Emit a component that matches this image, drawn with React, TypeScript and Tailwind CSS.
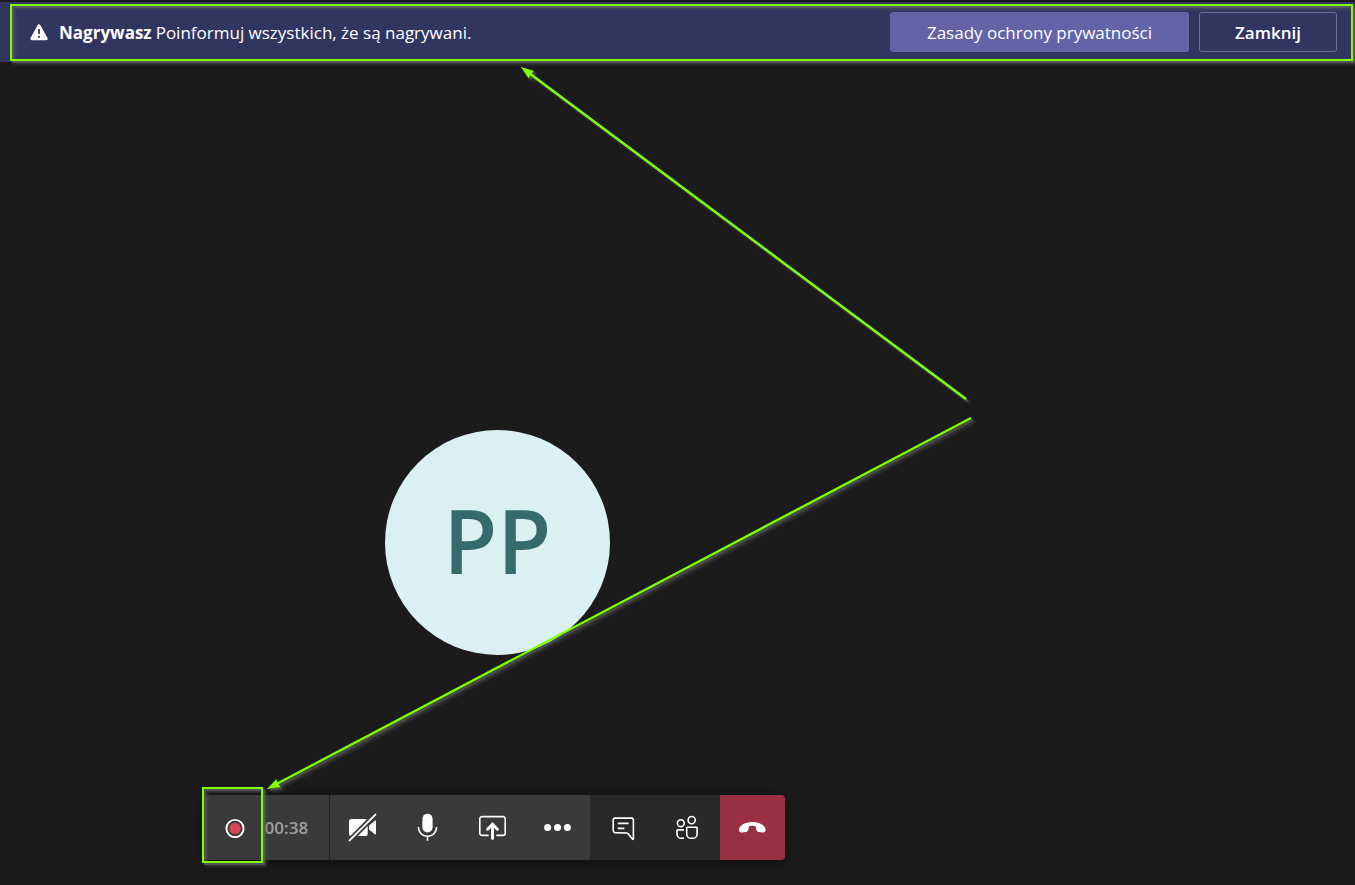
import React from 'react';

interface CallButtonProps {
  label: string;
  className?: string;
  children: React.ReactNode;
}

const CallButton: React.FC<CallButtonProps> = ({ label, className = '', children }) => (
  <button type="button" aria-label={label} className={`flex h-[65px] w-[65px] items-center justify-center ${className}`}>
    <svg width="29" height="29" viewBox="0 0 29 29" fill="none" stroke="none" aria-hidden="true">
      {children}
    </svg>
  </button>
);

// Green frame that points out a part of the screen
const Highlight: React.FC<{ className: string }> = ({ className }) => (
  <div
    className={`pointer-events-none absolute border-2 border-[#7fff00] [filter:drop-shadow(2px_2px_0_rgba(100,100,100,0.6))_drop-shadow(2px_2px_1px_rgba(90,90,90,0.6))] ${className}`}
  />
);

const RecordingBanner = () => (
  <header className="relative flex h-[60px] items-center justify-between bg-[#30365f] pr-[18px] pl-[30px] text-[17px] text-white">
    <Highlight className="top-[2px] right-[2px] bottom-px left-[10px]" />
    <div className="relative flex items-center pt-[2px]" role="status">
      <svg width="18" height="18" viewBox="0 0 18 18" className="mr-[11px] shrink-0" aria-hidden="true">
        <path d="M7.7 1a1.5 1.5 0 0 1 2.6 0l7.2 13a1.5 1.5 0 0 1-1.3 2.2H1.8A1.5 1.5 0 0 1 .5 14z" fill="#fff" />
        <path d="M9 5v5" stroke="#30365f" strokeWidth="1.8" />
        <circle cx="9" cy="12.8" r="1.1" fill="#30365f" />
      </svg>
      <strong className="mr-1 font-bold">Nagrywasz</strong>
      <span>Poinformuj wszystkich, że są nagrywani.</span>
    </div>
    <div className="relative flex gap-[10px]">
      <button type="button" className="h-10 w-[299px] rounded-[3px] bg-[#6264a7] pt-[2px]">Zasady ochrony prywatności</button>
      <button type="button" className="h-10 w-[138px] rounded-[3px] border border-[#6f7391] pt-[2px] font-semibold shadow-sm">Zamknij</button>
    </div>
  </header>
);

const CallToolbar = () => (
  <div role="toolbar" className="flex rounded-[4px] shadow-[0_2px_14px_rgba(0,0,0,0.55)]">
    <div className="relative flex h-[65px] w-[125px] items-center rounded-l-[4px] border-r border-[#202020] bg-[#3a3a3a]">
      <button type="button" aria-label="Nagrywanie" className="flex h-[65px] w-[60px] items-center justify-center">
        <svg width="20" height="20" viewBox="0 0 20 20" aria-hidden="true">
          <circle cx="10" cy="10.5" r="8.6" fill="none" stroke="#fff" strokeWidth="1.9" />
          <circle cx="10" cy="10.5" r="5.8" fill="#d74654" />
        </svg>
      </button>
      <span className="text-[17px] font-semibold text-[#a19f9d]">00:38</span>
      <Highlight className="top-[-8px] left-[-3px] h-[76px] w-[61px]" />
    </div>
    <div className="flex bg-[#3a3a3a]">
      <CallButton label="Włącz kamerę">
        <rect x="1" y="6" width="18.7" height="17" rx="2.6" fill="#fff" />
        <path d="M28 8.4v12.2c0 .8-.7 1-1.2.6L21 16.5v-4l5.8-4.7c.5-.4 1.2-.2 1.2.6z" fill="#fff" />
        <path d="M1 28 28 1" stroke="#3a3a3a" strokeWidth="5.4" />
        <path d="M1.6 27.4 27.4 1.6" stroke="#fff" strokeWidth="1.9" strokeLinecap="round" />
      </CallButton>
      <CallButton label="Wycisz">
        <rect x="9.4" y="0.8" width="10.2" height="18.6" rx="5.1" fill="#fff" />
        <path d="M5.4 14v.3a9.1 9.1 0 0 0 18.2 0V14M14.5 23.4v4.4" stroke="#fff" strokeWidth="1.6" />
      </CallButton>
      <CallButton label="Udostępnij">
        <path d="M10.7 22.4H4a2.2 2.2 0 0 1-2.2-2.2V5.8A2.2 2.2 0 0 1 4 3.6h21a2.2 2.2 0 0 1 2.2 2.2v14.4a2.2 2.2 0 0 1-2.2 2.2h-6.7" stroke="#fff" strokeWidth="1.6" />
        <path d="M14.5 11v14.4M9.6 16.2l4.9-4.9 4.9 4.9" stroke="#fff" strokeWidth="2.9" strokeLinecap="round" strokeLinejoin="round" />
      </CallButton>
      <CallButton label="Więcej akcji">
        <g fill="#fff">
          <circle cx="4.6" cy="14.5" r="3.5" />
          <circle cx="14.5" cy="14.5" r="3.5" />
          <circle cx="24.4" cy="14.5" r="3.5" />
        </g>
      </CallButton>
    </div>
    <div className="flex bg-[#292929]">
      <CallButton label="Pokaż konwersację">
        <path d="M7.2 5.1h16.2a2 2 0 0 1 2 2v18.6c0 .6-.6.9-1 .4l-4.2-5.3c-.4-.6-.9-.7-1.6-.8L7 19.6a2 2 0 0 1-1.8-2V7.1a2 2 0 0 1 2-2z" stroke="#fff" strokeWidth="1.6" />
        <path d="M9.8 10.4h10.8M9.8 15.4h6.6" stroke="#fff" strokeWidth="1.6" />
      </CallButton>
      <CallButton label="Pokaż uczestników">
        <g stroke="#fff" strokeWidth="1.6">
          <circle cx="7.8" cy="10.2" r="3.4" />
          <circle cx="18.7" cy="7.1" r="3.6" />
          <path d="M11 16.9H4.7c-.4 0-.7.3-.7.7v3.3a4.4 4.4 0 0 0 4.4 4.4H11" />
          <path d="M14.4 14.2h9a.7.7 0 0 1 .7.7v6a4.4 4.4 0 0 1-4.4 4.4h-1.6a4.4 4.4 0 0 1-4.4-4.4v-6a.7.7 0 0 1 .7-.7z" />
        </g>
      </CallButton>
    </div>
    <CallButton label="Rozłącz" className="rounded-r-[4px] bg-[#9b2f42]">
      <path d="M14.3 9C7.2 9 1 12.6 1 16.8c0 2 1.3 3 3.2 2.7l3.6-.6c1.6-.3 2.4-1.4 2.7-3l.3-2c.1-.6.4-.8 1-.9 1.6-.3 3.4-.3 5 0 .6.1.9.3 1 .9l.3 2c.3 1.6 1.1 2.7 2.7 3l3.6.6c1.9.3 3.2-.7 3.2-2.7C27.6 12.6 21.4 9 14.3 9z" fill="#fff" />
    </CallButton>
  </div>
);

// Callout arrows drawn over the whole screen
const Arrows = () => (
  <svg className="pointer-events-none absolute inset-0 h-full w-full" viewBox="0 0 1355 885" preserveAspectRatio="none" aria-hidden="true">
    <defs>
      <marker id="head" markerUnits="userSpaceOnUse" markerWidth="16" markerHeight="12" refX="14" refY="6" orient="auto">
        <path d="M14 6 1 1.4 2 6 1 10.6z" fill="#7fff00" stroke="none" />
      </marker>
    </defs>
    <g
      className="[filter:drop-shadow(2px_2px_0_rgba(90,90,90,0.6))_drop-shadow(2px_2px_1px_rgba(85,85,85,0.6))]"
      stroke="#7fff00"
      strokeWidth="2.4"
    >
      {/* the shafts stop inside the heads so that the tips stay sharp */}
      <path d="M966 399 529 73" />
      <path d="M971 418 276 784.3" />
      <path d="M529 73 521 67" strokeWidth="0.5" markerEnd="url(#head)" />
      <path d="M276 784.3 267 789" strokeWidth="0.5" markerEnd="url(#head)" />
    </g>
  </svg>
);

export default function App() {
  return (
    <div className="relative flex min-h-screen flex-col bg-[#1b1b1b] pt-[2px] font-['Open_Sans','Noto_Sans',sans-serif]">
      <RecordingBanner />
      <main className="flex flex-1 flex-col justify-end gap-[140px] pb-[25px]">
        <div className="flex w-[73.4%] justify-center">
          <div className="flex size-[225px] items-center justify-center rounded-full bg-[#dbf0f2] pb-[6px] text-[88px] font-semibold text-[#356b6c]">PP</div>
        </div>
        <div className="flex w-[73%] justify-center">
          <CallToolbar />
        </div>
      </main>
      <Arrows />
    </div>
  );
}
